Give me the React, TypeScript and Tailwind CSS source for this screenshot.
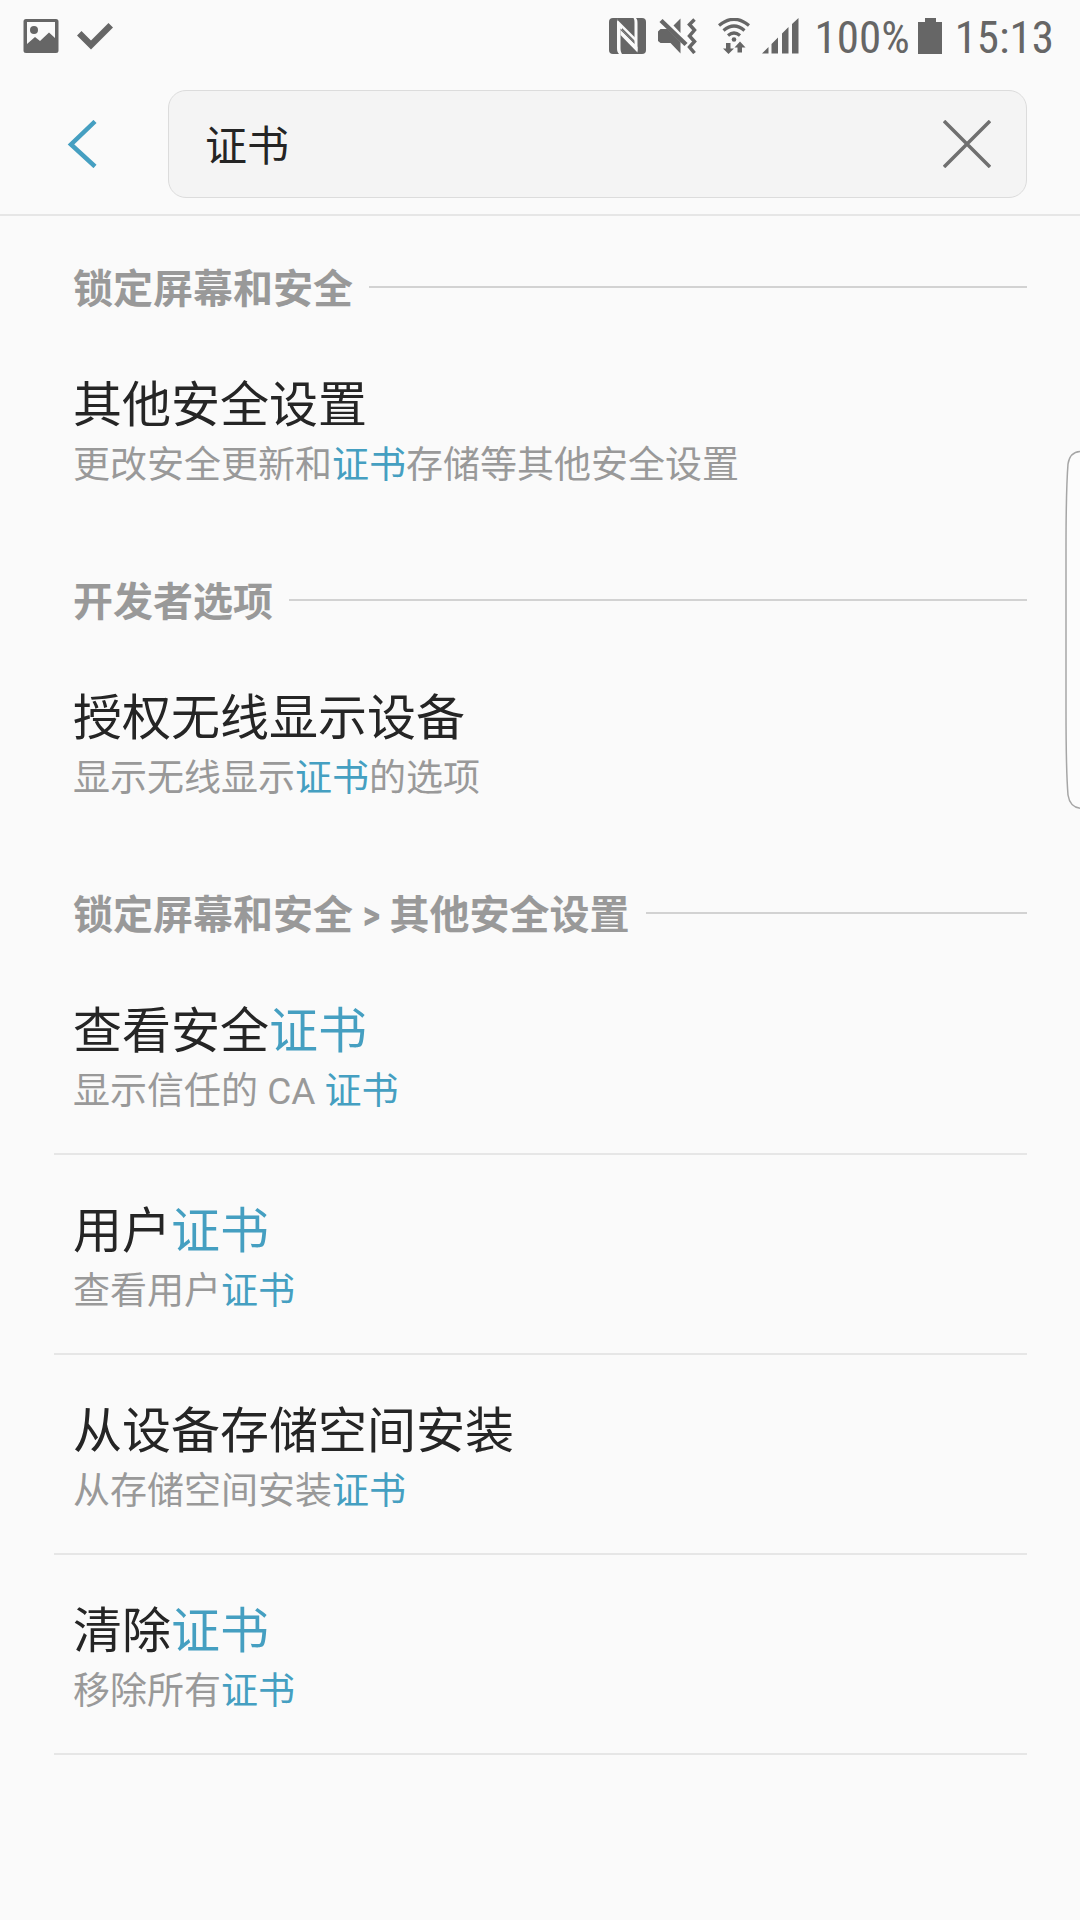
import React, { useState } from 'react';

interface ResultItem {
  title: string;
  summary: string;
}

interface ResultSection {
  heading: string;
  divided: boolean;
  items: ResultItem[];
}

const KEYWORD = '证书';

const sections: ResultSection[] = [
  {
    heading: '锁定屏幕和安全',
    divided: false,
    items: [{ title: '其他安全设置', summary: '更改安全更新和证书存储等其他安全设置' }],
  },
  {
    heading: '开发者选项',
    divided: false,
    items: [{ title: '授权无线显示设备', summary: '显示无线显示证书的选项' }],
  },
  {
    heading: '锁定屏幕和安全 > 其他安全设置',
    divided: true,
    items: [
      { title: '查看安全证书', summary: '显示信任的 CA 证书' },
      { title: '用户证书', summary: '查看用户证书' },
      { title: '从设备存储空间安装', summary: '从存储空间安装证书' },
      { title: '清除证书', summary: '移除所有证书' },
    ],
  },
];

const Highlight: React.FC<{ text: string }> = ({ text }) => {
  const parts = text.split(KEYWORD);
  return (
    <>
      {parts.map((part, i) => (
        <React.Fragment key={i}>
          {i > 0 && <mark className="bg-transparent text-[#459fc1]">{KEYWORD}</mark>}
          {part}
        </React.Fragment>
      ))}
    </>
  );
};

const StatusBar: React.FC = () => (
  <div className="flex h-[71px] items-center justify-between pl-[23px] pr-[26px] text-[#666666]">
    <div className="flex items-center gap-[18px]">
      <svg className="h-9 w-9" viewBox="0 0 36 36" fill="currentColor">
        <path fillRule="evenodd" d="M3 1h30a2.500 2.500 0 0 1 2.500 2.500v29a2.500 2.500 0 0 1-2.500 2.500h-30a2.500 2.500 0 0 1-2.500-2.500v-29a2.500 2.500 0 0 1 2.500-2.500zM4 4v22l8-7 5 4 9-8.500 6 5.500V4z" />
        <circle cx="11" cy="12" r="4" />
      </svg>
      <svg className="h-9 w-9" viewBox="0 0 36 36" fill="currentColor">
        <path d="M0 17.500 4.500 13 14 22.500 31.500 5 36 9.500 14 31.500z" />
      </svg>
    </div>
    <div className="flex items-center">
      <svg className="mr-3 h-9 w-[37px]" viewBox="0 0 37 36" fill="currentColor">
        <rect x="0" y="0" width="37" height="36" rx="4" />
        <path d="M8 0C8 2 8.500 3 10 4.500L25.500 20V6C25.500 3 25.500 1.500 24.500 0H27C28.500 1.500 28.500 3 28.500 6V33L13.500 17.500V14.500L25.500 26.500V24L11.500 10.500V30C11.500 33 12 34.500 13 36H10C8.500 34.500 8 33 8 30z" fill="#fafafa" />
        <path d="M11.500 17 28.500 34.500V29L11.500 12z" fill="#fafafa" />
        <path d="M13 12 25.500 24V20.500L13 9z" fill="currentColor" />
        <path d="M9 2.500 27 20.500V24L9 6z" fill="#fafafa" />
      </svg>
      <svg className="mr-5 h-9 w-10" viewBox="0 0 40 36" fill="currentColor">
        <path d="M15.500 7.500 22.500.5v14.500z" />
        <path d="M0 13.500 2.500 11h7l13 13v11.500L12.500 25H2.500L0 23z" />
        <path d="M3 2.500 28 26.500" stroke="currentColor" strokeWidth="4.500" />
        <path d="M36.500 1.500 31.500 6.500l5 5.500-5 6 5 5.500-5 5.500 5 6" fill="none" stroke="currentColor" strokeWidth="3.500" />
      </svg>
      <svg className="mr-3 h-9 w-8" viewBox="0 0 32 36" fill="none" stroke="currentColor" strokeWidth="3.200">
        <path d="M1 7.500Q16-5 31 7.500M5.500 12.500Q16 3.500 26.500 12.500M10 17.500Q16 12.500 22 17.500" />
        <circle cx="16" cy="21.500" r="2.300" fill="currentColor" stroke="none" />
        <path d="M8 25h4.500v5.500H16L10.500 36 5 30.500h3zM19.500 34.500V29.500H16.500L22 23.500l5.500 6H24v5z" fill="currentColor" stroke="none" />
      </svg>
      <svg className="mr-4 h-9 w-[37px]" viewBox="0 0 37 36" fill="currentColor">
        <path d="M0 35.500 6.500 29v6.500zM9.500 26 16 19.500v16H9.500zM20 15.500l6.500-6.500v26.500H20zM30 6 36.500 0v35.500H30z" />
      </svg>
      <span className="pt-1 font-['Roboto_Condensed',Roboto,sans-serif] text-[45px] leading-none">100%</span>
      <svg className="ml-2 mr-[13px] h-9 w-6" viewBox="0 0 24 36" fill="currentColor">
        <path d="M7 0h11v4h6v32H0V4h7z" />
      </svg>
      <span className="pt-1 font-['Roboto_Condensed',Roboto,sans-serif] text-[45px] leading-none">15:13</span>
    </div>
  </div>
);

const App: React.FC = () => {
  const [query, setQuery] = useState(KEYWORD);

  return (
    <div className="relative min-h-screen overflow-hidden bg-[#fafafa] font-[Roboto,'Noto_Sans_CJK_SC',sans-serif] text-[#252525]">
      <StatusBar />

      <header className="flex items-center border-b-2 border-[#e6e6e6] pb-4 pl-[52px] pr-[53px] pt-[19px]">
        <button type="button" aria-label="返回" className="mr-14 flex h-[60px] w-[60px] items-center justify-center text-[#459fc1]">
          <svg className="h-12 w-8" viewBox="0 0 32 48" fill="none" stroke="currentColor" strokeWidth="4.500">
            <path d="M29 1.500 5 24.500l24 22" />
          </svg>
        </button>
        <div className="flex h-[108px] min-w-0 flex-1 items-center rounded-[18px] border border-[#dcdcdc] bg-[#f4f4f4] pl-9 pr-[27px]">
          <input
            type="text"
            aria-label="搜索"
            value={query}
            onChange={(e) => setQuery(e.target.value)}
            className="h-full min-w-0 flex-1 bg-transparent pb-[3px] text-[42px] outline-none"
          />
          <button type="button" aria-label="清除" onClick={() => setQuery('')} className="flex h-16 w-16 items-center justify-center text-[#707070]">
            <svg className="h-12 w-12" viewBox="0 0 48 48" fill="none" stroke="currentColor" strokeWidth="3.500">
              <path d="M1 1l46 46M47 1L1 47" />
            </svg>
          </button>
        </div>
      </header>

      <main className="pl-[54px] pr-[53px]">
        {sections.map((section) => (
          <section key={section.heading}>
            <div className="flex h-[113px] items-center gap-4 pl-[19px] pt-7">
              <h2 className="pt-[6px] font-['Roboto_Condensed','Noto_Sans_CJK_SC',sans-serif] text-[40px] font-bold leading-[60px] text-[#999999]">
                {section.heading}
              </h2>
              <div className="h-[2px] flex-1 bg-[#d2d2d2]" />
            </div>
            <ul>
              {section.items.map((item) => (
                <li key={item.title} className={section.divided ? 'border-b-2 border-[#e6e6e6]' : 'border-b-2 border-transparent'}>
                  <a href="#" className="block h-[198px] pl-[19px] pt-[47px]">
                    <div className="text-[49px] leading-[60px]">
                      <Highlight text={item.title} />
                    </div>
                    <div className="text-[37px] leading-[60px] text-[#999999]">
                      <Highlight text={item.summary} />
                    </div>
                  </a>
                </li>
              ))}
            </ul>
          </section>
        ))}
      </main>

      {/* edge panel handle */}
      <svg className="absolute right-0 top-[450px] h-[360px] w-4" viewBox="0 0 16 360" fill="#fcfcfc" stroke="#a6a6a6" strokeWidth="1.500">
        <path d="M18 1.500Q6 1 4 14Q2 40 2 100V260Q2 320 4 345Q6 358 18 358.500" />
      </svg>
    </div>
  );
};

export default App;
